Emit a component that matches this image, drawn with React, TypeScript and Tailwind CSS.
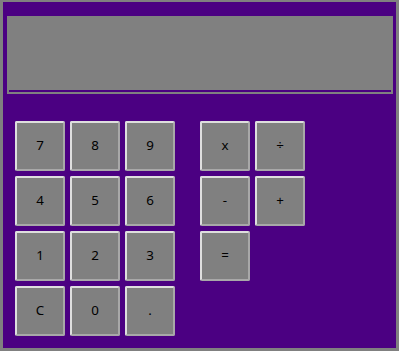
import React from "react";

const Btn = ({ label }: { label: string }) => (
  <button className="w-[50px] h-[50px] bg-[#808080] border-2 border-t-[#dedede] border-l-[#dedede] border-r-[#a8a8a8] border-b-[#a8a8a8] rounded-[2px] text-[13.333px] text-black flex items-center justify-center leading-none" style={{ fontFamily: '"Noto Sans", sans-serif' }}>
    {label}
  </button>
);

export default function App() {
  const nums = ["7", "8", "9", "4", "5", "6", "1", "2", "3", "C", "0", "."];
  const ops = ["x", "÷", "-", "+", "="];
  return (
    <div className="w-[399px] h-[351px] bg-[#4b0082] border-[#808080] border-t-2 border-l-3 border-r-3 border-b-3 pt-[14px] pl-[4px] pr-[3px]">
      <div className="h-[78px] bg-[#808080] px-[2px] pb-[2px]">
        <div className="h-[76px] border-b-2 border-[#4b0082]" />
      </div>
      <div className="mt-[27px] ml-[8px] flex gap-[25px] items-start">
        <div className="grid grid-cols-[50px_50px_50px] gap-[5px]">
          {nums.map((n) => (
            <Btn key={n} label={n} />
          ))}
        </div>
        <div className="grid grid-cols-[50px_50px] gap-[5px]">
          {ops.map((n) => (
            <Btn key={n} label={n} />
          ))}
        </div>
      </div>
    </div>
  );
}
